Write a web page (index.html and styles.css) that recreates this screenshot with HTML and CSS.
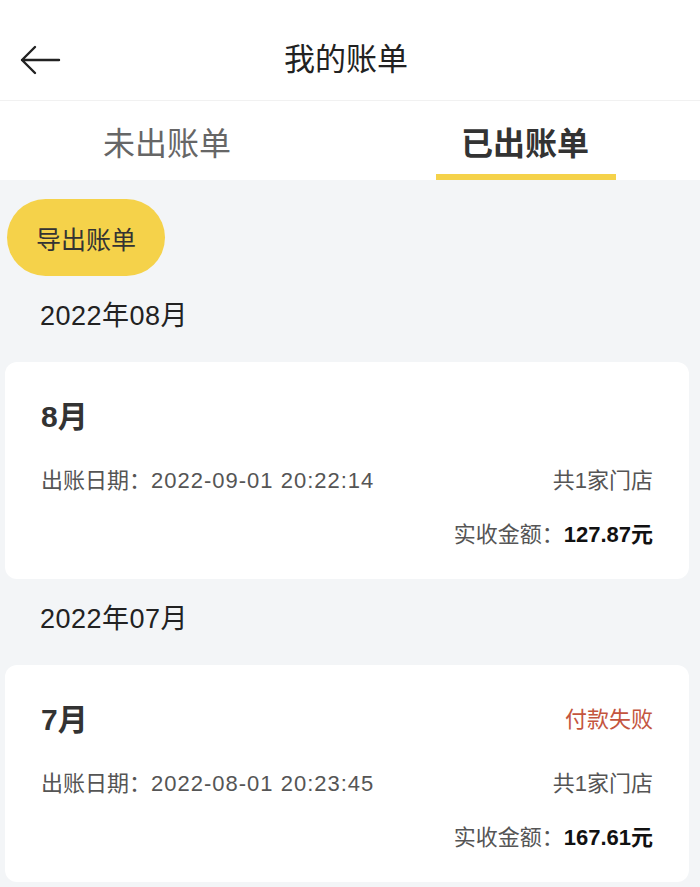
FILE: index.html
```html
<!DOCTYPE html>
<html lang="zh">
<head>
<meta charset="utf-8">
<title>我的账单</title>
<link rel="stylesheet" href="styles.css">
</head>
<body>
<header class="topbar">
  <span class="back">
    <svg width="42" height="32" viewBox="0 0 42 32" fill="none" stroke="#222" stroke-width="2.4" stroke-linecap="round" stroke-linejoin="round"><path d="M3 16H40M16 3L3 16L16 29"/></svg>
  </span>
  <h1 class="title">我的账单</h1>
</header>
<nav class="tabs">
  <div class="tab tab-left">未出账单</div>
  <div class="tab tab-active">已出账单</div>
</nav>
<main class="content">
  <button class="export">导出账单</button>

  <div class="month-head">2022年08月</div>
  <section class="card">
    <div class="card-top"><span class="card-month">8月</span></div>
    <div class="row"><span>出账日期：<span class="num">2022-09-01 20:22:14</span></span><span>共1家门店</span></div>
    <div class="amount">实收金额：<b>127.87元</b></div>
  </section>

  <div class="month-head">2022年07月</div>
  <section class="card">
    <div class="card-top"><span class="card-month">7月</span><span class="fail">付款失败</span></div>
    <div class="row"><span>出账日期：<span class="num">2022-08-01 20:23:45</span></span><span>共1家门店</span></div>
    <div class="amount">实收金额：<b>167.61元</b></div>
  </section>
</main>
</body>
</html>
```
FILE: styles.css
```css
* { box-sizing: border-box; }
html, body { margin: 0; padding: 0; }
body {
  width: 700px;
  background: #f3f5f7;
  font-family: "Liberation Sans", "Noto Sans CJK SC", sans-serif;
  color: #333;
}
.topbar {
  position: relative;
  height: 101px;
  padding-top: 20px;
  background: #fff;
  border-bottom: 1px solid #f1f1f1;
  display: flex;
  align-items: center;
  justify-content: center;
}
.back {
  position: absolute;
  left: 19px;
  top: 44px;
  display: flex;
}
.title {
  margin: 0;
  font-size: 31px;
  font-weight: 400;
  color: #222;
  line-height: 40px;
  padding-right: 8px;
}
.tabs {
  height: 79px;
  background: #fff;
  display: grid;
  grid-template-columns: 1fr 1fr;
}
.tab {
  display: flex;
  align-items: center;
  justify-content: center;
  font-size: 32px;
  color: #666;
  position: relative;
}
.tab-left { padding-right: 16px; }
.tab-active {
  color: #333;
  font-weight: 700;
}
.tab-active::after {
  content: "";
  position: absolute;
  bottom: 0;
  left: 50%;
  width: 180px;
  margin-left: -89px;
  height: 6px;
  background: #f5d24a;
}
.content {
  padding: 19px 11px 0 5px;
}
.export {
  display: block;
  margin-left: 2px;
  width: 158px;
  height: 77px;
  border: none;
  border-radius: 39px;
  background: #f5d24a;
  font-family: "Liberation Sans", "Noto Sans CJK SC", sans-serif;
  font-size: 25px;
  color: #333;
  padding: 0;
}
.month-head {
  padding: 20px 0 26px 35px;
  line-height: 40px;
  font-size: 27px;
  letter-spacing: 0.5px;
  color: #222;
}
.card {
  background: #fff;
  border-radius: 12px;
  padding: 30px 36px 24px;
}
.card-top {
  display: flex;
  justify-content: space-between;
  align-items: center;
  height: 44px;
}
.card-month {
  font-size: 30px;
  font-weight: 700;
  color: #333;
}
.fail {
  font-size: 22px;
  color: #c4553e;
}
.row {
  margin-top: 22px;
  height: 40px;
  display: flex;
  justify-content: space-between;
  align-items: center;
  font-size: 22px;
  color: #555;
}
.num { letter-spacing: 1px; }
.amount {
  margin-top: 17px;
  height: 40px;
  line-height: 40px;
  text-align: right;
  font-size: 22px;
  color: #555;
}
.amount b {
  color: #111;
  font-weight: 700;
}
```
